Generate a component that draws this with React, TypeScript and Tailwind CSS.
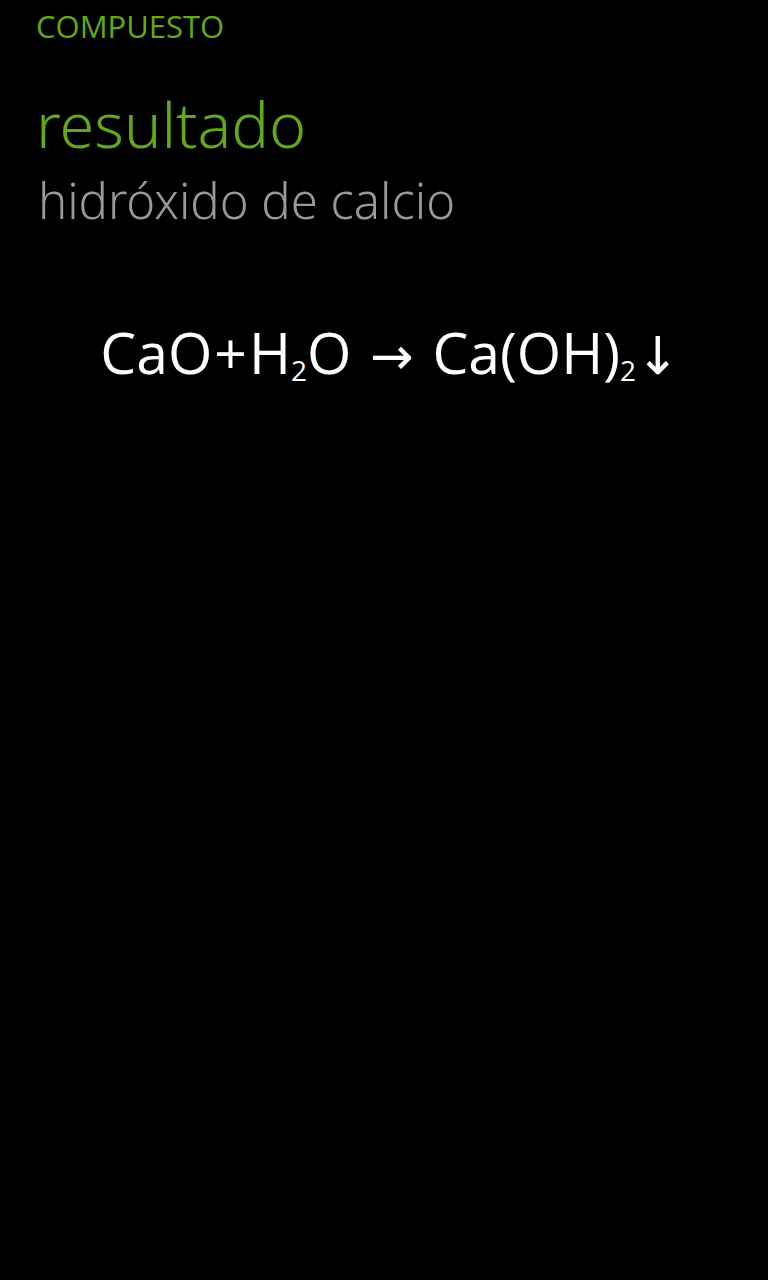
export default function App() {
  return (
    <main className="min-h-screen bg-black px-9 pt-2 font-['Open_Sans','Noto_Sans',sans-serif] text-white">
      <header>
        <p className="text-[31px] leading-9 text-[#60a917]">COMPUESTO</p>
        <h1 className="mt-9 font-['Noto_Sans','Open_Sans',sans-serif] text-[63px] leading-[88px] font-light text-[#60a917]">
          resultado
        </h1>
        <h2 className="pl-0.5 font-['Noto_Sans','Open_Sans',sans-serif] text-[49px] leading-[64px] font-light text-[#999999]">
          hidróxido de calcio
        </h2>
      </header>
      <section className="mt-[82px] text-center text-[57px] leading-[76px] whitespace-nowrap">
        CaO<span className="mx-0.5">+</span>H<sub className="text-[28px]">2</sub>O{' '}
        <span className="mx-1 font-['DejaVu_Sans',sans-serif] text-[52px]">→</span>{' '}
        Ca(OH)<sub className="text-[28px]">2</sub>
        <span className="-mr-3 font-['DejaVu_Sans',sans-serif] text-[52px]">↓</span>
      </section>
    </main>
  );
}
